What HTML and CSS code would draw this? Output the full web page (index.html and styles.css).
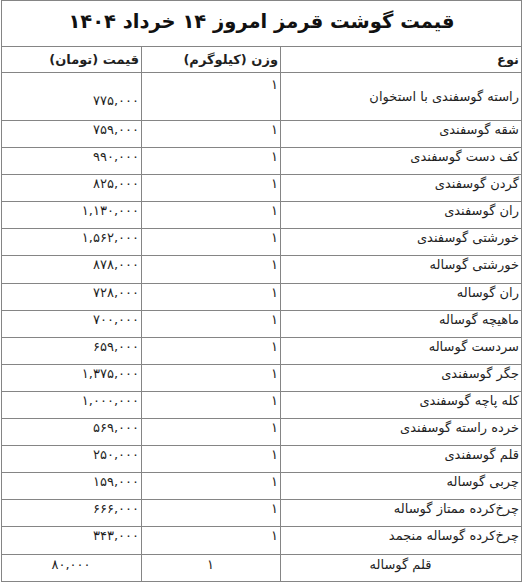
FILE: index.html
```html
<!DOCTYPE html>
<html lang="fa" dir="rtl">
<head>
<meta charset="utf-8">
<link rel="stylesheet" href="styles.css">
</head>
<body>
<table class="prices">
  <colgroup>
    <col class="c-type">
    <col class="c-weight">
    <col class="c-price">
  </colgroup>
  <tr class="title-row"><td colspan="3" class="title"><span class="title-text">قیمت گوشت قرمز امروز ۱۴ خرداد ۱۴۰۴</span></td></tr>
  <tr class="head-row"><th>نوع</th><th>وزن (کیلوگرم)</th><th>قیمت (تومان)</th></tr>
  <tr class="tall-row"><td class="type">راسته گوسفندی با استخوان</td><td class="weight">۱</td><td class="price">۷۷۵,۰۰۰</td></tr>
  <tr><td>شقه گوسفندی</td><td>۱</td><td>۷۵۹,۰۰۰</td></tr>
  <tr><td>کف دست گوسفندی</td><td>۱</td><td>۹۹۰,۰۰۰</td></tr>
  <tr><td>گردن گوسفندی</td><td>۱</td><td>۸۲۵,۰۰۰</td></tr>
  <tr><td>ران گوسفندی</td><td>۱</td><td>۱,۱۳۰,۰۰۰</td></tr>
  <tr><td>خورشتی گوسفندی</td><td>۱</td><td>۱,۵۶۲,۰۰۰</td></tr>
  <tr><td>خورشتی گوساله</td><td>۱</td><td>۸۷۸,۰۰۰</td></tr>
  <tr><td>ران گوساله</td><td>۱</td><td>۷۲۸,۰۰۰</td></tr>
  <tr><td>ماهیچه گوساله</td><td>۱</td><td>۷۰۰,۰۰۰</td></tr>
  <tr><td>سردست گوساله</td><td>۱</td><td>۶۵۹,۰۰۰</td></tr>
  <tr><td>جگر گوسفندی</td><td>۱</td><td>۱,۳۷۵,۰۰۰</td></tr>
  <tr><td>کله پاچه گوسفندی</td><td>۱</td><td>۱,۰۰۰,۰۰۰</td></tr>
  <tr><td>خرده راسته گوسفندی</td><td>۱</td><td>۵۶۹,۰۰۰</td></tr>
  <tr><td>قلم گوسفندی</td><td>۱</td><td>۲۵۰,۰۰۰</td></tr>
  <tr><td>چربی گوساله</td><td>۱</td><td>۱۵۹,۰۰۰</td></tr>
  <tr><td>چرخ‌کرده ممتاز گوساله</td><td>۱</td><td>۶۶۶,۰۰۰</td></tr>
  <tr><td>چرخ‌کرده گوساله منجمد</td><td>۱</td><td>۳۴۳,۰۰۰</td></tr>
  <tr class="last-row"><td>قلم گوساله</td><td>۱</td><td>۸۰,۰۰۰</td></tr>
</table>
</body>
</html>
```

FILE: styles.css
```css
html, body {
  margin: 0;
  padding: 0;
  background: #fff;
}
body {
  padding-left: 1px;
  font-family: "DejaVu Sans", sans-serif;
  color: #1f1f1f;
}
.prices {
  border-collapse: collapse;
  width: 520px;
  table-layout: fixed;
  font-size: 13px;
}
.c-type { width: 241px; }
.c-weight { width: 139px; }
.c-price { width: 140px; }
.prices tr {
  height: 27.1px;
}
.prices td, .prices th {
  border: 1px solid #858585;
  padding: 1px 2px 0 1px;
  text-align: right;
  vertical-align: top;
  line-height: 16px;
  white-space: nowrap;
  overflow: hidden;
}
.prices tr.title-row {
  height: 46px;
}
.title-row td.title {
  text-align: center;
  vertical-align: middle;
  padding: 0 0 2px 0;
  line-height: 30px;
}
.title-text {
  display: inline-block;
  font-size: 19.5px;
  font-weight: bold;
  color: #111;
}
.prices tr.head-row {
  height: 26px;
}
.head-row th {
  font-weight: bold;
  vertical-align: middle;
  padding-top: 0;
}
.prices tr.tall-row {
  height: 48px;
}
.tall-row td {
  vertical-align: middle;
}
.tall-row td.weight {
  vertical-align: top;
  padding-top: 4px;
}
.tall-row td.price {
  padding-top: 8px;
}
.last-row td {
  text-align: center;
  padding-top: 2px;
}
```
